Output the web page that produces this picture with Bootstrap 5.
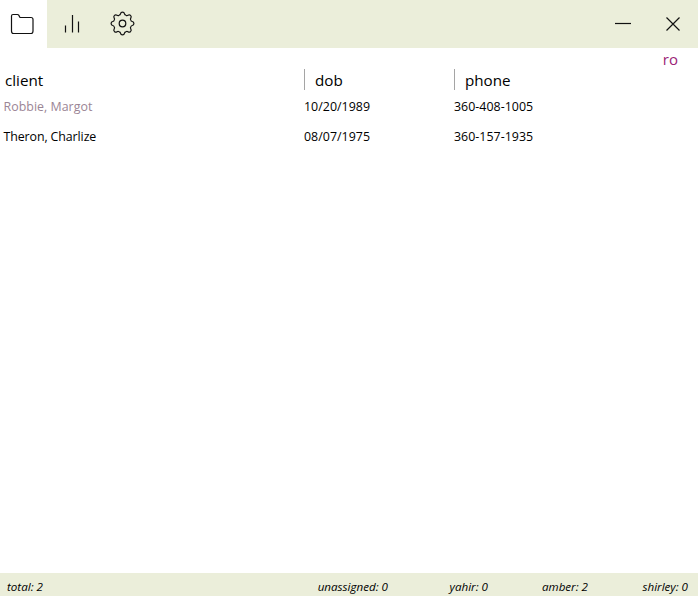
<!DOCTYPE html>
<html lang="en">
<head>
<meta charset="utf-8">
<title>Clients</title>
<link rel="stylesheet" href="https://cdn.jsdelivr.net/npm/bootstrap@5.3.0/dist/css/bootstrap.min.css">
<style>
body{font-family:"Segoe UI","Open Sans","Noto Sans",sans-serif;font-size:12.4px;color:#000;background:#fff}
.topbar{height:48px;background:#ebeeda}
.tab-btn{width:50px;height:48px;border-radius:0;padding:0 0 1px}
.tab-btn.current{width:47px;background:#fff;padding:0 3px 1px 0}
.win-btn{width:50px;height:48px;border-radius:0;padding:0 0 1px}
.tab-btn svg,.win-btn svg{display:block;fill:none;stroke:#111;stroke-width:1.2}
.searchline{height:20px;padding-right:20px;font-size:15px;line-height:23px;color:#9b2376}
.client-grid{display:grid;grid-template-columns:304px 150px 1fr}
.heads{height:24px;font-size:15.2px;line-height:24px}
.heads>div+div{padding-left:11px;position:relative}
.heads>div+div::before{content:"";position:absolute;left:0;top:1px;width:1px;height:21px;background:#a5a5a5}
.heads>div:first-child{padding-left:5px}
.entry{height:30px;line-height:30px}
.entry>div+div{letter-spacing:.03px}
.entry>div:first-child{padding-left:3.500px;letter-spacing:-.1px}
.entry>.inactive-name:first-child{color:#9b8595;letter-spacing:.03px}
.statusbar{height:23px;background:#ebeeda;font-size:11.6px;font-style:italic;line-height:27px;padding:0 10px 0 7px}
.statusbar .count{width:100px;text-align:right}
.statusbar .wide{width:110px}
</style>
</head>
<body class="vh-100 d-flex flex-column overflow-hidden">
<header class="topbar d-flex flex-shrink-0">
  <button class="tab-btn current btn border-0 d-flex align-items-center justify-content-center" aria-label="Clients">
    <svg width="24" height="24" viewBox="0 0 24 24"><path d="M1.500 4Q1.500 2.500 3 2.500H7.500Q8.300 2.500 8.700 3.100L10 5.500H21Q23 5.500 23 7.500V19Q23 21.500 21 21.500H3.500Q1.500 21.500 1.500 19Z"/></svg>
  </button>
  <button class="tab-btn btn border-0 d-flex align-items-center justify-content-center" aria-label="Reports">
    <svg width="24" height="24" viewBox="0 0 24 24"><path d="M5.500 13.500V20.500M12.500 3V20.500M18.500 9.500V20.500"/></svg>
  </button>
  <button class="tab-btn btn border-0 d-flex align-items-center justify-content-center" aria-label="Settings">
    <svg width="26" height="26" viewBox="-13.5 -12.5 26 26">
      <defs><path id="tooth" d="M-3.450 -8.330Q-2.200 -8.500 -2 -9.700Q-1.700 -11.400 0 -11.400Q1.700 -11.400 2 -9.700Q2.200 -8.500 3.450 -8.330"/></defs>
      <use href="#tooth"/><use href="#tooth" transform="rotate(45)"/><use href="#tooth" transform="rotate(90)"/><use href="#tooth" transform="rotate(135)"/><use href="#tooth" transform="rotate(180)"/><use href="#tooth" transform="rotate(225)"/><use href="#tooth" transform="rotate(270)"/><use href="#tooth" transform="rotate(315)"/>
      <circle r="3.300"/>
    </svg>
  </button>
  <div class="d-flex ms-auto">
    <button class="win-btn btn border-0 d-flex align-items-center justify-content-center" aria-label="Minimize">
      <svg width="16" height="16" viewBox="0 0 16 16"><path d="M0 7.500H16"/></svg>
    </button>
    <button class="win-btn btn border-0 d-flex align-items-center justify-content-center" aria-label="Close">
      <svg width="16" height="16" viewBox="0 0 16 16"><path d="M1.500 1.500L14.500 14.500M14.500 1.500L1.500 14.500"/></svg>
    </button>
  </div>
</header>
<main class="flex-grow-1">
  <div class="searchline text-end">ro</div>
  <div class="client-grid heads"><div>client</div><div>dob</div><div>phone</div></div>
  <div class="client-grid entry"><div class="inactive-name">Robbie, Margot</div><div>10/20/1989</div><div>360-408-1005</div></div>
  <div class="client-grid entry"><div>Theron, Charlize</div><div>08/07/1975</div><div>360-157-1935</div></div>
</main>
<footer class="statusbar d-flex flex-shrink-0">
  <span class="me-auto">total: 2</span>
  <span class="count wide">unassigned: 0</span><span class="count">yahir: 0</span><span class="count">amber: 2</span><span class="count">shirley: 0</span>
</footer>
<script src="https://cdn.jsdelivr.net/npm/bootstrap@5.3.0/dist/js/bootstrap.bundle.min.js"></script>
</body>
</html>
